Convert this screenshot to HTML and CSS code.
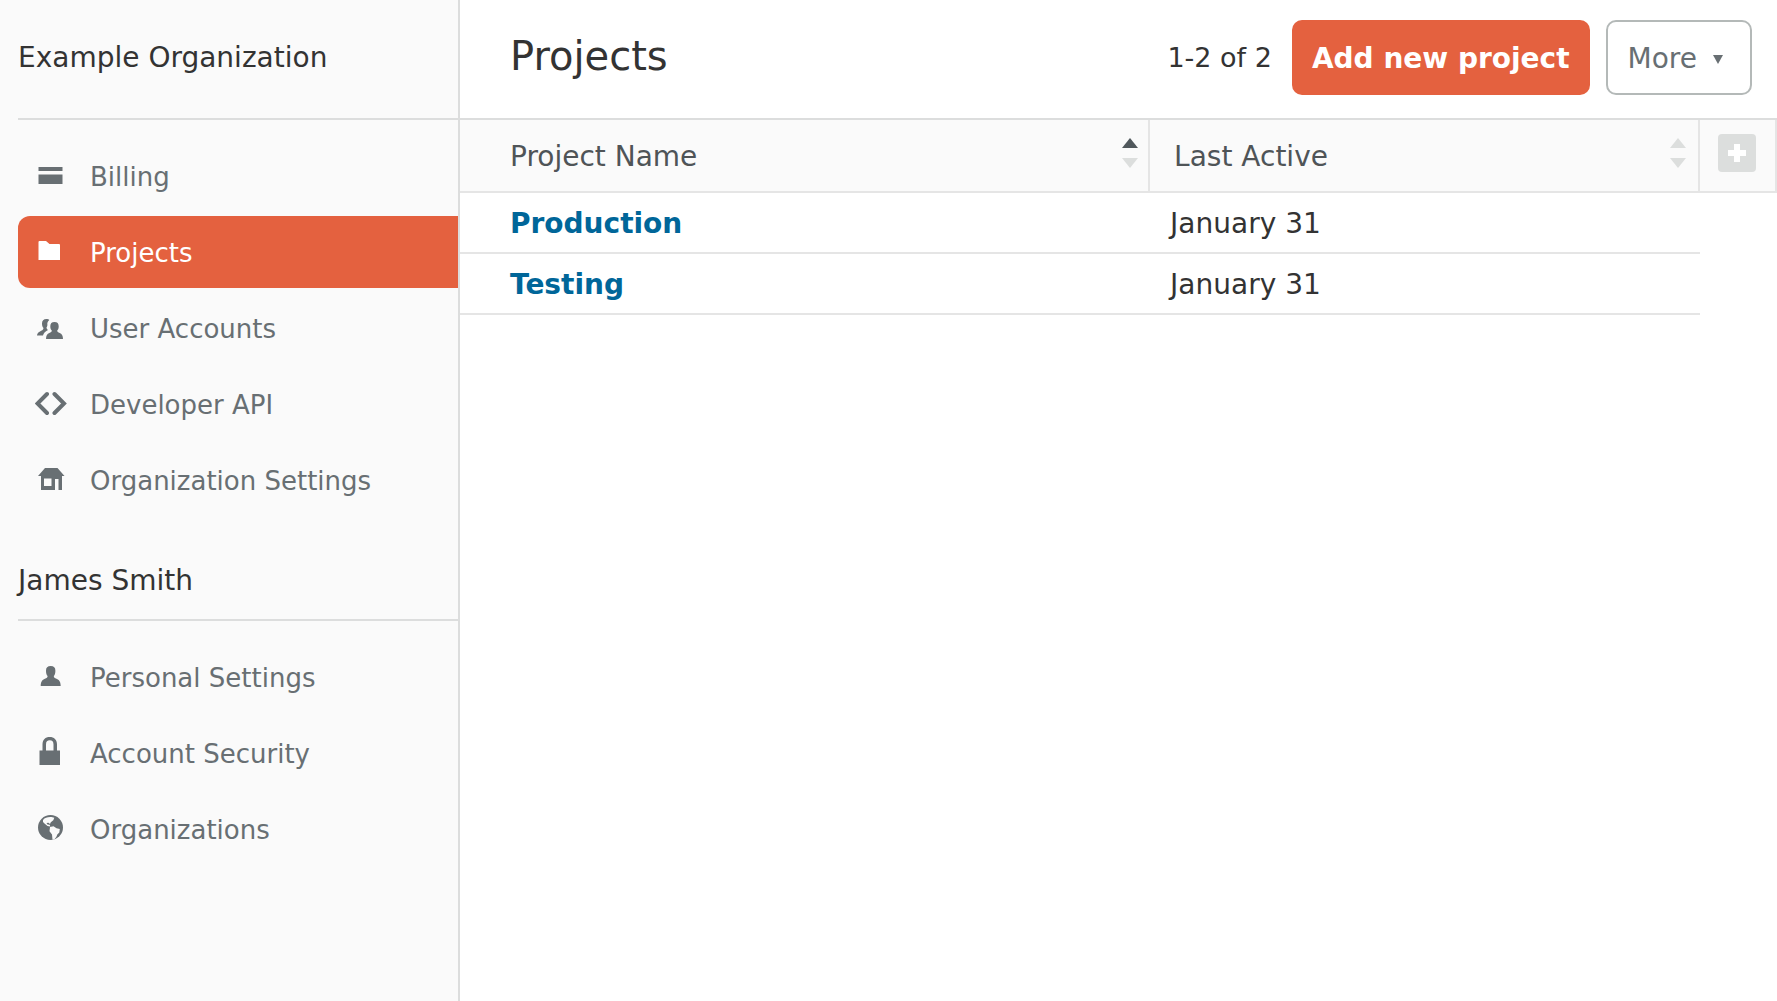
FILE: index.html
```html
<!DOCTYPE html>
<html lang="en">
<head>
    <meta charset="UTF-8">
    <meta name="viewport" content="width=device-width, initial-scale=1.0">
    <title>Projects</title>
    <link rel="stylesheet" href="styles.css">
</head>
<body>

    <div class="layout">
        <aside class="sidebar">
            <h2 class="org-name">Example Organization</h2>
            <nav class="nav">
                <a href="#billing" class="nav-item">
                    <svg class="icon" viewBox="0 0 32 32"><path d="M3.500 8h24v4h-24zM3.500 15.500h24V25h-24z"/></svg>
                    Billing
                </a>
                <a href="#projects" class="nav-item active">
                    <svg class="icon" viewBox="0 0 32 32"><path d="M3.500 7q0-1 1-1H11l3.500 3H24q1 0 1 1v15H3.500z"/></svg>
                    Projects
                </a>
                <a href="#users" class="nav-item">
                    <svg class="icon" viewBox="0 0 32 32">
                        <path d="M11.500 8c-3 0-4.500 1.500-4.500 4.500 0 2.500.5 3.500 1.500 4.500 0 2-2 2.500-3.500 3.500-2 1-3 2.500-3 4h6c.5-2 2-4 5-5.500-1-.8-1.500-1.500-1.500-2.500 1-1.500 1-2.500.8-4 .2-1.500 1-2.500 2-3.500-.5-.7-1.800-1-2.800-1z"/>
                        <path d="M19.500 11c2.900 0 4.200 1.500 4.200 4.200 0 2.300-.6 3.300-1.500 4.300 0 1.500 1 1.900 2.500 2.400 2 .7 3.300 2.700 3.300 6.100H11c0-3.400 1.300-5.400 3.300-6.100 1.500-.5 2.500-.9 2.500-2.400-.9-1-1.500-2-1.500-4.300 0-2.700 1.300-4.200 4.200-4.200z"/>
                    </svg>
                    User Accounts
                </a>
                <a href="#api" class="nav-item">
                    <svg class="icon" viewBox="0 0 32 32"><path class="stroke" d="M12 7l-9.500 9.500L12 26M19.500 7l9.500 9.500-9.500 9.500"/></svg>
                    Developer API
                </a>
                <a href="#organization" class="nav-item">
                    <svg class="icon" viewBox="0 0 32 32"><path fill-rule="evenodd" d="M10 5h12.500l7 8H27v14h-3.500V16H20v11H6V13H3zM9 15.500v7.500h7.500v-7.500z"/></svg>
                    Organization Settings
                </a>
            </nav>

            <h2 class="user-name">James Smith</h2>
            <nav class="nav">
                <a href="#personal" class="nav-item">
                    <svg class="icon" viewBox="0 0 32 32"><path d="M15.700 6c3.200 0 4.700 1.500 4.700 4.700 0 2.800-.6 4.300-1.600 5.300 0 1.700 1 2.200 2.700 2.800 2.600 1 4.200 3 4.200 7.200h-20c0-4.200 1.600-6.200 4.200-7.200 1.700-.6 2.700-1.100 2.700-2.800-1-1-1.600-2.500-1.600-5.300 0-3.200 1.500-4.700 4.700-4.700z"/></svg>
                    Personal Settings
                </a>
                <a href="#security" class="nav-item">
                    <svg class="icon" viewBox="0 0 32 32"><path fill-rule="evenodd" d="M4.500 14.500h3V8.500c0-5 2.900-7.500 7.200-7.500S22 3.500 22 8.500v6h3V29H4.500zM11 14.500h7.500v-6c0-3-1.200-4.200-3.700-4.200S11 5.500 11 8.500z"/></svg>
                    Account Security
                </a>
                <a href="#organizations" class="nav-item">
                    <svg class="icon" viewBox="0 0 32 32">
                        <circle cx="15.500" cy="15.500" r="12.500"/>
                        <path class="land" d="M8 8c2-2.500 4.500-3.200 8.500-3l2.800.8-1 2.400-2.500 2-.8 1.800-1.500-1.300-2 .4 1 1.500 2.200.2.600 1.800-2.800-.5-3-2.500L8 10zM15 15l3.500-.8 3 2 3.300.8-.5 3.500-2 2-1 2.500-2 2.500-1.800.3L17 22.500l-2.500-3.200z"/>
                    </svg>
                    Organizations
                </a>
            </nav>
        </aside>

        <main class="content">
            <header class="content-header">
                <h1>Projects</h1>
                <span class="count">1-2 of 2</span>
                <button type="button" class="btn btn-primary">Add new project</button>
                <button type="button" class="btn btn-more">
                    More
                    <svg class="caret" viewBox="0 0 10 10"><path d="M0 1h10L5 10z"/></svg>
                </button>
            </header>

            <table class="project-table">
                <thead>
                    <tr>
                        <th class="col-name">
                            <div class="th-inner">
                                Project Name
                                <svg class="sort asc" viewBox="0 0 16 30"><path class="up" d="M8 0l8 10H0z"/><path d="M0 20h16L8 30z"/></svg>
                            </div>
                        </th>
                        <th class="col-active">
                            <div class="th-inner">
                                Last Active
                                <svg class="sort" viewBox="0 0 16 30"><path d="M8 0l8 10H0z"/><path d="M0 20h16L8 30z"/></svg>
                            </div>
                        </th>
                        <th class="col-add">
                            <button type="button" class="add-column" aria-label="Add column">
                                <svg viewBox="0 0 38 38"><path d="M16 10h6v6h6v6h-6v6h-6v-6h-6v-6h6z"/></svg>
                            </button>
                        </th>
                    </tr>
                </thead>
                <tbody>
                    <tr>
                        <td class="name"><a href="#production">Production</a></td>
                        <td>January 31</td>
                    </tr>
                    <tr>
                        <td class="name"><a href="#testing">Testing</a></td>
                        <td>January 31</td>
                    </tr>
                </tbody>
            </table>
        </main>
    </div>

</body>
</html>
```
FILE: styles.css
```css
/* General Styles */
* {
    box-sizing: border-box;
}

body {
    font-family: Verdana, "DejaVu Sans", sans-serif;
    font-size: 28px;
    line-height: 36px;
    color: #333;
    background: #fff;
    margin: 0;
}

h1, h2 {
    font-weight: normal;
    margin: 0;
}

a {
    text-decoration: none;
}

button {
    font-family: inherit;
    cursor: pointer;
}

.layout {
    display: flex;
    min-height: 100vh;
}

/* Sidebar */
.sidebar {
    flex: 0 0 460px;
    padding-left: 18px;
    background: #fafafa;
    border-right: 2px solid #dcdddd;
}

.org-name, .user-name {
    font-size: 28px;
    border-bottom: 2px solid #dcdddd;
}

.org-name {
    padding: 40px 0 42px;
}

.user-name {
    padding: 43px 0 20px;
}

.nav {
    display: flex;
    flex-direction: column;
    gap: 4px;
    padding: 20px 0 4px;
}

.nav-item {
    display: flex;
    align-items: center;
    gap: 23px;
    height: 72px;
    padding: 2px 0 0 17px;
    font-size: 26px;
    color: #686f73;
    border-radius: 12px 0 0 12px;
}

.nav-item.active {
    color: #fff;
    background: #e4613f;
}

.icon {
    width: 32px;
    height: 32px;
    margin-bottom: 4px;
    fill: currentColor;
}

.icon .stroke {
    fill: none;
    stroke: currentColor;
    stroke-width: 4;
    stroke-linecap: round;
}

.icon .land {
    fill: #fafafa;
}

/* Content */
.content {
    flex: 1;
    min-width: 0;
}

.content-header {
    display: flex;
    align-items: center;
    height: 120px;
    padding: 0 25px 3px 50px;
    border-bottom: 2px solid #dcdddd;
}

.content-header h1 {
    flex: 1;
    padding-bottom: 4px;
    font-size: 40px;
}

.count {
    margin-right: 20px;
    font-size: 27px;
}

.btn {
    height: 75px;
    padding: 2px 20px 0;
    font-size: 28px;
    border-radius: 10px;
}

.btn-primary {
    font-weight: bold;
    color: #fff;
    background: #e4613f;
    border: none;
}

.btn-more {
    display: flex;
    align-items: center;
    gap: 16px;
    margin-left: 16px;
    padding-right: 27px;
    color: #686f73;
    background: #fff;
    border: 2px solid #b4b9b8;
}

.caret {
    width: 10px;
    height: 10px;
    fill: #686f73;
}

/* Project Table */
.project-table {
    width: 100%;
    table-layout: fixed;
    border-collapse: separate;
    border-spacing: 0;
}

.project-table th {
    height: 73px;
    padding: 2px 12px 0 24px;
    font-weight: normal;
    text-align: left;
    color: #4f5457;
    background: #fafafa;
    border-right: 2px solid #e5e5e5;
    border-bottom: 2px solid #e5e5e5;
}

.project-table td {
    height: 61px;
    padding: 2px 18px 0 20px;
    border-bottom: 2px solid #e5e5e5;
}

.project-table th.col-name,
.project-table td.name {
    padding-left: 50px;
}

.project-table th.col-name {
    width: 52.4%;
    padding-right: 10px;
}

.project-table th.col-add {
    width: 77px;
    padding: 0 18px;
}

.project-table td a {
    font-weight: bold;
    color: #069;
}

.th-inner {
    display: flex;
    align-items: center;
    justify-content: space-between;
}

.sort {
    width: 16px;
    height: 30px;
    margin-bottom: 8px;
    fill: #dcdedd;
}

.sort.asc .up {
    fill: #50585c;
}

.add-column {
    display: block;
    width: 38px;
    height: 38px;
    margin-bottom: 6px;
    padding: 0;
    background: #dcdedd;
    border: none;
    border-radius: 4px;
}

.add-column svg {
    display: block;
    fill: #fff;
}
```
